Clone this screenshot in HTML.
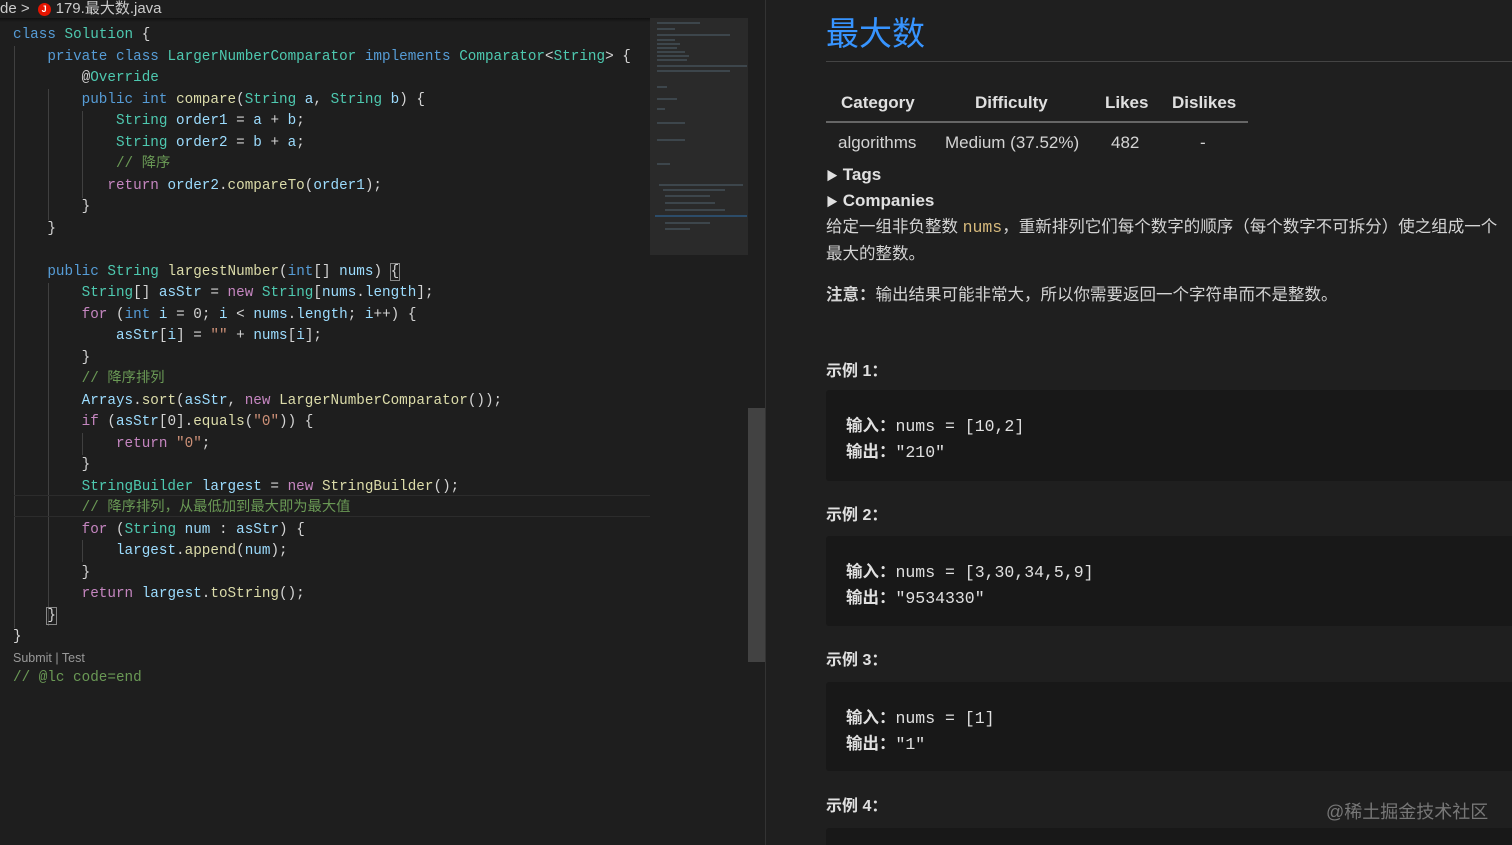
<!DOCTYPE html>
<html><head><meta charset="utf-8"><style>
*{margin:0;padding:0;box-sizing:border-box}
html,body{width:1512px;height:845px;overflow:hidden}
body{background:#1e1e1e;position:relative;font-family:"Liberation Sans","Noto Sans CJK SC",sans-serif}
.crumb{position:absolute;left:0;top:0;width:765px;height:18px;background:#1e1e1e;color:#cccccc;font-size:15px;line-height:17px;white-space:nowrap}
.crumb .j{display:inline-block;width:13px;height:13px;border-radius:50%;background:#e51400;color:#fff;font-size:9px;line-height:13px;text-align:center;vertical-align:1px;margin:0 5px 0 8px;font-weight:bold}
.shadow{position:absolute;left:0;top:18px;width:650px;height:4px;background:linear-gradient(#111,#1e1e1e)}
.code{position:absolute;left:13px;top:25px;font-family:"Liberation Mono","Noto Sans CJK SC",monospace;font-size:14.3px;color:#d4d4d4}
.code div{height:21.5px;line-height:21.5px;white-space:pre}
.k{color:#569cd6}.t{color:#4ec9b0}.f{color:#dcdcaa}.v{color:#9cdcfe}.c{color:#c586c0}.m{color:#6a9955}.s{color:#ce9178}
.guide{position:absolute;width:1px;background:#404040}
.mini{position:absolute;left:650px;top:18px;width:98px;height:827px;background:#1e1e1e}
.minisl{position:absolute;left:650px;top:18px;width:98px;height:237px;background:#2a2a2a}
.scroll{position:absolute;left:748px;top:408px;width:17px;height:254px;background:#424242}
.div{position:absolute;left:765px;top:0;width:1px;height:845px;background:#333}
.right{position:absolute;left:766px;top:0;width:746px;height:845px;background:#1f1f1f;color:#d4d4d4;overflow:hidden}
.ab{position:absolute;white-space:nowrap}
.pre{position:absolute;left:60px;width:700px;background:#181818;border-radius:3px;font-family:"Liberation Mono","Noto Sans CJK SC",monospace;font-size:16.5px;color:#e0e0e0}
.pre div{position:absolute;left:20px;white-space:nowrap}
.pre b{font-family:"Liberation Sans","Noto Sans CJK SC",sans-serif;font-weight:bold}
.h4{position:absolute;left:60px;font-size:16px;font-weight:bold;color:#e0e0e0}
</style></head><body>
<div class="crumb">de &gt;<span class="j">J</span>179.最大数.java</div>
<div class="shadow"></div>
<div class="guide" style="left:14px;top:46px;height:582px"></div>
<div class="guide" style="left:48px;top:89px;height:131px"></div>
<div class="guide" style="left:82px;top:111px;height:87px"></div>
<div class="guide" style="left:48px;top:283px;height:343px"></div>
<div class="guide" style="left:82px;top:433px;height:22px"></div>
<div class="guide" style="left:82px;top:540px;height:22px"></div>
<div style="position:absolute;left:14px;top:495px;width:636px;height:22px;border-top:1px solid #2c2c2c;border-bottom:1px solid #2c2c2c"></div>
<div class="code"><div><span class="k">class</span> <span class="t">Solution</span> {</div><div>    <span class="k">private</span> <span class="k">class</span> <span class="t">LargerNumberComparator</span> <span class="k">implements</span> <span class="t">Comparator</span>&lt;<span class="t">String</span>&gt; {</div><div>        @<span class="t">Override</span></div><div>        <span class="k">public</span> <span class="k">int</span> <span class="f">compare</span>(<span class="t">String</span> <span class="v">a</span>, <span class="t">String</span> <span class="v">b</span>) {</div><div>            <span class="t">String</span> <span class="v">order1</span> = <span class="v">a</span> + <span class="v">b</span>;</div><div>            <span class="t">String</span> <span class="v">order2</span> = <span class="v">b</span> + <span class="v">a</span>;</div><div>            <span class="m">// 降序</span></div><div>           <span class="c">return</span> <span class="v">order2</span>.<span class="f">compareTo</span>(<span class="v">order1</span>);</div><div>        }</div><div>    }</div><div> </div><div>    <span class="k">public</span> <span class="t">String</span> <span class="f">largestNumber</span>(<span class="k">int</span>[] <span class="v">nums</span>) <span style="outline:1px solid #888">{</span></div><div>        <span class="t">String</span>[] <span class="v">asStr</span> = <span class="c">new</span> <span class="t">String</span>[<span class="v">nums</span>.<span class="v">length</span>];</div><div>        <span class="c">for</span> (<span class="k">int</span> <span class="v">i</span> = 0; <span class="v">i</span> &lt; <span class="v">nums</span>.<span class="v">length</span>; <span class="v">i</span>++) {</div><div>            <span class="v">asStr</span>[<span class="v">i</span>] = <span class="s">""</span> + <span class="v">nums</span>[<span class="v">i</span>];</div><div>        }</div><div>        <span class="m">// 降序排列</span></div><div>        <span class="v">Arrays</span>.<span class="f">sort</span>(<span class="v">asStr</span>, <span class="c">new</span> <span class="f">LargerNumberComparator</span>());</div><div>        <span class="c">if</span> (<span class="v">asStr</span>[0].<span class="f">equals</span>(<span class="s">"0"</span>)) {</div><div>            <span class="c">return</span> <span class="s">"0"</span>;</div><div>        }</div><div>        <span class="t">StringBuilder</span> <span class="v">largest</span> = <span class="c">new</span> <span class="f">StringBuilder</span>();</div><div>        <span class="m">// 降序排列，从最低加到最大即为最大值</span></div><div>        <span class="c">for</span> (<span class="t">String</span> <span class="v">num</span> : <span class="v">asStr</span>) {</div><div>            <span class="v">largest</span>.<span class="f">append</span>(<span class="v">num</span>);</div><div>        }</div><div>        <span class="c">return</span> <span class="v">largest</span>.<span class="f">toString</span>();</div><div>    <span style="outline:1px solid #888">}</span></div><div>}</div></div>
<div class="ab" style="left:13px;top:651px;font-size:12.5px;color:#999">Submit | Test</div>
<div class="ab" style="left:13px;top:670px;font-family:'Liberation Mono',monospace;font-size:14.3px;color:#6a9955">// @lc code=end</div>
<div class="mini"></div>
<div class="minisl"></div>
<svg style="position:absolute;left:655px;top:20px" width="95" height="215">
<g stroke="#6a8a9a" stroke-width="1" opacity=".6">
<line x1="2" y1="3" x2="45" y2="3"/><line x1="2" y1="9" x2="20" y2="9"/><line x1="2" y1="15" x2="75" y2="15"/><line x1="2" y1="20" x2="20" y2="20"/><line x1="2" y1="24" x2="25" y2="24"/><line x1="2" y1="28" x2="22" y2="28"/><line x1="2" y1="32" x2="30" y2="32"/><line x1="2" y1="36" x2="34" y2="36"/><line x1="2" y1="40" x2="32" y2="40"/><line x1="2" y1="46" x2="92" y2="46"/><line x1="2" y1="51" x2="75" y2="51"/><line x1="2" y1="67" x2="12" y2="67"/><line x1="2" y1="79" x2="22" y2="79"/><line x1="2" y1="89" x2="10" y2="89"/><line x1="2" y1="103" x2="30" y2="103"/><line x1="2" y1="120" x2="30" y2="120"/><line x1="2" y1="144" x2="15" y2="144"/>
<line x1="4" y1="165" x2="88" y2="165"/><line x1="8" y1="170" x2="70" y2="170"/><line x1="10" y1="176" x2="55" y2="176"/><line x1="10" y1="183" x2="60" y2="183"/><line x1="10" y1="190" x2="70" y2="190"/><line x1="10" y1="196" x2="40" y2="196"/><line x1="10" y1="203" x2="55" y2="203"/><line x1="10" y1="209" x2="35" y2="209"/>
</g><line x1="0" y1="196" x2="92" y2="196" stroke="#2f6ea8"/></svg>
<div class="scroll"></div>
<div class="div"></div>
<div class="right">
<div class="ab" style="left:60px;top:11px;font-size:33px;color:#3794ff;font-family:'Noto Sans CJK SC',sans-serif;line-height:40px">最大数</div>
<div class="ab" style="left:60px;top:61px;width:686px;height:1px;background:#444"></div>
<div class="ab" style="left:75px;top:93px;font-size:17px;font-weight:bold;color:#e0e0e0">Category</div>
<div class="ab" style="left:209px;top:93px;font-size:17px;font-weight:bold;color:#e0e0e0">Difficulty</div>
<div class="ab" style="left:339px;top:93px;font-size:17px;font-weight:bold;color:#e0e0e0">Likes</div>
<div class="ab" style="left:406px;top:93px;font-size:17px;font-weight:bold;color:#e0e0e0">Dislikes</div>
<div class="ab" style="left:60px;top:121px;width:422px;height:2px;background:#666"></div>
<div class="ab" style="left:72px;top:133px;font-size:17px">algorithms</div>
<div class="ab" style="left:179px;top:133px;font-size:17px">Medium (37.52%)</div>
<div class="ab" style="left:345px;top:133px;font-size:17px">482</div>
<div class="ab" style="left:434px;top:133px;font-size:17px">-</div>
<div class="ab" style="left:60px;top:165px;font-size:17px;font-weight:bold;color:#e0e0e0"><span style="font-size:12px">▶</span> Tags</div>
<div class="ab" style="left:60px;top:191px;font-size:17px;font-weight:bold;color:#e0e0e0"><span style="font-size:12px">▶</span> Companies</div>
<div class="ab" style="left:60px;top:214px;font-size:16.5px;line-height:26px;width:690px;white-space:normal">给定一组非负整数 <span style="font-family:'Liberation Mono',monospace;color:#d7ba7d">nums</span>，重新排列它们每个数字的顺序（每个数字不可拆分）使之组成一个<br>最大的整数。</div>
<div class="ab" style="left:60px;top:281px;font-size:16.5px"><b>注意：</b>输出结果可能非常大，所以你需要返回一个字符串而不是整数。</div>
<div class="h4" style="top:357px">示例 1：</div>
<div class="pre" style="top:390px;height:91px"><div style="top:22px"><b>输入：</b>nums = [10,2]</div><div style="top:48px"><b>输出：</b>"210"</div></div>
<div class="h4" style="top:501px">示例 2：</div>
<div class="pre" style="top:536px;height:90px"><div style="top:22px"><b>输入：</b>nums = [3,30,34,5,9]</div><div style="top:48px"><b>输出：</b>"9534330"</div></div>
<div class="h4" style="top:646px">示例 3：</div>
<div class="pre" style="top:682px;height:89px"><div style="top:22px"><b>输入：</b>nums = [1]</div><div style="top:48px"><b>输出：</b>"1"</div></div>
<div class="h4" style="top:792px">示例 4：</div>
<div class="pre" style="top:828px;height:40px"></div>
<div class="ab" style="left:560px;top:798px;font-size:18px;color:#777">@稀土掘金技术社区</div>
</div>
</body></html>
